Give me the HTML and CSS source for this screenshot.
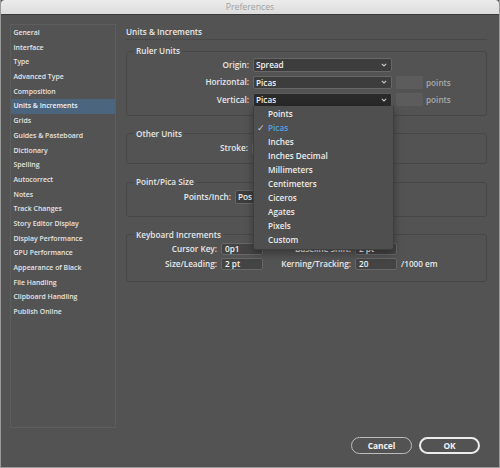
FILE: index.html
```html
<!DOCTYPE html>
<html>
<head>
<meta charset="utf-8">
<link rel="stylesheet" href="styles.css">
</head>
<body>
<div class="window">
  <div class="titlebar">Preferences</div>
  <div class="body">
    <div class="content">
      <ul class="sidebar">
        <li>General</li>
        <li>Interface</li>
        <li>Type</li>
        <li>Advanced Type</li>
        <li>Composition</li>
        <li class="active">Units &amp; Increments</li>
        <li>Grids</li>
        <li>Guides &amp; Pasteboard</li>
        <li>Dictionary</li>
        <li>Spelling</li>
        <li>Autocorrect</li>
        <li>Notes</li>
        <li>Track Changes</li>
        <li>Story Editor Display</li>
        <li>Display Performance</li>
        <li>GPU Performance</li>
        <li>Appearance of Black</li>
        <li>File Handling</li>
        <li>Clipboard Handling</li>
        <li>Publish Online</li>
      </ul>
      <div class="main">
        <div class="main-title">Units &amp; Increments</div>

        <fieldset class="group group-ruler">
          <legend>Ruler Units</legend>
          <div class="grid grid-ruler">
            <span class="label">Origin:</span>
            <div class="select"><span>Spread</span><svg class="chev" viewBox="0 0 6 4" width="6" height="4"><polyline points="0.8,0.8 3,3 5.2,0.8"/></svg></div>
            <span></span><span></span>

            <span class="label">Horizontal:</span>
            <div class="select"><span>Picas</span><svg class="chev" viewBox="0 0 6 4" width="6" height="4"><polyline points="0.8,0.8 3,3 5.2,0.8"/></svg></div>
            <div class="field-disabled"></div><span class="unit">points</span>

            <span class="label">Vertical:</span>
            <div class="select select-open"><span>Picas</span><svg class="chev" viewBox="0 0 6 4" width="6" height="4"><polyline points="0.8,0.8 3,3 5.2,0.8"/></svg>
              <ul class="menu">
                <li><span class="check"></span><span>Points</span></li>
                <li class="selected"><span class="check">✓</span><span>Picas</span></li>
                <li><span class="check"></span><span>Inches</span></li>
                <li><span class="check"></span><span>Inches Decimal</span></li>
                <li><span class="check"></span><span>Millimeters</span></li>
                <li><span class="check"></span><span>Centimeters</span></li>
                <li><span class="check"></span><span>Ciceros</span></li>
                <li><span class="check"></span><span>Agates</span></li>
                <li><span class="check"></span><span>Pixels</span></li>
                <li><span class="check"></span><span>Custom</span></li>
              </ul>
            </div>
            <div class="field-disabled"></div><span class="unit">points</span>
          </div>
        </fieldset>

        <fieldset class="group group-other">
          <legend>Other Units</legend>
          <div class="grid grid-other">
            <span class="label">Stroke:</span>
            <div class="select"><span></span><svg class="chev" viewBox="0 0 6 4" width="6" height="4"><polyline points="0.8,0.8 3,3 5.2,0.8"/></svg></div>
          </div>
        </fieldset>

        <fieldset class="group group-pica">
          <legend>Point/Pica Size</legend>
          <div class="grid grid-pica">
            <span class="label">Points/Inch:</span>
            <div class="select"><span>Pos</span><svg class="chev" viewBox="0 0 6 4" width="6" height="4"><polyline points="0.8,0.8 3,3 5.2,0.8"/></svg></div>
          </div>
        </fieldset>

        <fieldset class="group group-keys">
          <legend>Keyboard Increments</legend>
          <div class="grid grid-keys">
            <span class="label">Cursor Key:</span>
            <div class="input">0p1</div>
            <span class="label">Baseline Shift:</span>
            <div class="input">2 pt</div>
            <span></span>

            <span class="label">Size/Leading:</span>
            <div class="input">2 pt</div>
            <span class="label">Kerning/Tracking:</span>
            <div class="input">20</div>
            <span class="unit-text">/1000 em</span>
          </div>
        </fieldset>
      </div>
    </div>
    <div class="buttons">
      <div class="btn">Cancel</div>
      <div class="btn btn-default">OK</div>
    </div>
  </div>
</div>
</body>
</html>
```

FILE: styles.css
```css
* { box-sizing: border-box; }

html, body {
  margin: 0;
  padding: 0;
  background: #535353;
}

body {
  font-family: "Open Sans", "DejaVu Sans", sans-serif;
  color: #e6e6e6;
}

.window {
  width: 500px;
  height: 468px;
  background: #535353;
  border-left: 1px solid #9a9a9a;
  border-right: 1px solid #9a9a9a;
  border-bottom: 1px solid #9a9a9a;
  overflow: hidden;
}

.titlebar {
  height: 15px;
  background: linear-gradient(#ececec, #dcdcdc);
  border-bottom: 1px solid #3a3a3a;
  border-radius: 4px 4px 0 0;
  color: #a2a2a2;
  font-size: 8.7px;
  line-height: 14px;
  text-align: center;
}

.body {
  padding-top: 9px;
}

.content {
  display: flex;
  align-items: flex-start;
}

.sidebar {
  list-style: none;
  margin: 0 0 0 9px;
  padding: 1px 0 0 0;
  width: 106px;
  height: 404px;
  border: 1px solid #5d5d5d;
  flex: none;
}

.sidebar li {
  height: 14.7px;
  line-height: 14.7px;
  padding-left: 2.5px;
  font-size: 6.9px;
  font-weight: 600;
  color: #e4e4e4;
  white-space: nowrap;
}

.sidebar li.active {
  background: #4c657f;
  color: #f2f2f2;
}

.main {
  margin-left: 10px;
  width: 361px;
  flex: none;
  font-size: 8.2px;
  font-weight: 600;
}

.main-title {
  height: 16px;
  line-height: 15px;
  border-bottom: 1px solid #484848;
  color: #e8e8e8;
}

.group {
  margin: 13px 0 0 0;
  padding: 3px 8px 9px 7px;
  border: 1px solid #474747;
  border-radius: 3px;
  min-width: 0;
}

.group-ruler { margin-top: 6px; padding-top: 2px; padding-bottom: 8px; }
.group-other { padding-top: 3px; padding-bottom: 8px; }
.group-pica  { padding-top: 3px; padding-bottom: 12px; }
.group-keys  { padding-top: 3px; padding-bottom: 11px; }

.group legend {
  padding: 0 2px;
  line-height: 10px;
  color: #e6e6e6;
}

.grid {
  display: grid;
  column-gap: 4px;
  align-items: center;
}

.grid-ruler {
  grid-template-columns: 115px 139px 27px auto;
  row-gap: 4px;
}

.grid-other {
  grid-template-columns: 114px 139px;
}

.grid-pica {
  grid-template-columns: 97px 152px;
}

.grid-keys {
  grid-template-columns: 83px 42px 84px 42px auto;
  row-gap: 2.5px;
}

.label {
  text-align: right;
  color: #e8e8e8;
  white-space: nowrap;
  line-height: 10px;
}

.select {
  position: relative;
  height: 13.5px;
  display: flex;
  align-items: center;
  justify-content: space-between;
  padding: 0 4px 0 2px;
  background: #3d3d3d;
  border: 1px solid #676767;
  border-radius: 2px;
  color: #f2f2f2;
  white-space: nowrap;
  overflow: visible;
}

.select > span {
  overflow: hidden;
  line-height: 11px;
}

.select-open {
  background: #2a2a2a;
  border-color: #5a5a5a;
}

.chev {
  flex: none;
  fill: none;
  stroke: #c8c8c8;
  stroke-width: 1.1;
}

.field-disabled {
  height: 13px;
  background: #5c5c5c;
  border-radius: 1px;
}

.unit {
  color: #a9a9a9;
  margin-left: -1px;
}

.input {
  height: 12.5px;
  line-height: 10.5px;
  padding-left: 3px;
  background: #444444;
  border: 1px solid #676767;
  border-radius: 2px;
  color: #f2f2f2;
}

.unit-text {
  color: #e8e8e8;
}

.menu {
  position: absolute;
  top: 100%;
  left: -1px;
  width: 141px;
  margin: 0;
  padding: 1.5px 0 2px 0;
  list-style: none;
  background: #4f4f4f;
  border: 1px solid #3e3e3e;
  border-top: none;
  border-radius: 0 0 3px 3px;
  box-shadow: 0 3px 8px rgba(0, 0, 0, 0.35);
  z-index: 5;
}

.menu li {
  display: grid;
  grid-template-columns: 14px 1fr;
  height: 14px;
  line-height: 14px;
  color: #ececec;
}

.menu .check {
  text-align: left;
  color: #d0d0d0;
  font-size: 9px;
  font-weight: 400;
  padding-left: 3px;
}

.menu li.selected {
  color: #4ea2e8;
}

.buttons {
  display: flex;
  justify-content: flex-end;
  gap: 7px;
  margin-top: 9px;
  padding-right: 19px;
}

.btn {
  width: 61px;
  height: 17px;
  line-height: 15px;
  text-align: center;
  font-size: 8.4px;
  font-weight: 700;
  color: #f4f4f4;
  border: 1px solid #bdbdbd;
  border-radius: 9px;
}

.btn-default {
  border: 2px solid #ececec;
  line-height: 13px;
}
```
